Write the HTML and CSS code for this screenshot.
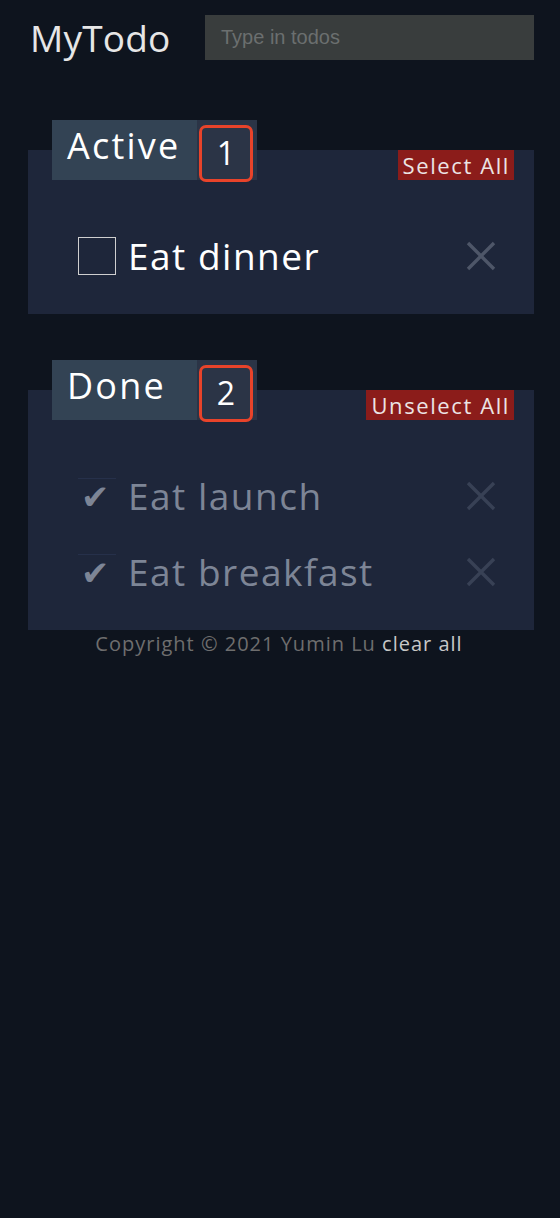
FILE: index.html
```html
<!DOCTYPE html>
<html lang="en">
<head>
<meta charset="utf-8">
<title>MyTodo</title>
<link rel="stylesheet" href="styles.css">
</head>
<body>
<header class="top">
  <h1 class="brand">MyTodo</h1>
  <input class="new-todo" type="text" placeholder="Type in todos">
</header>
<main class="lists">
  <section class="card">
    <div class="card-head">
      <div class="tab">
        <span class="tab-title">Active</span>
        <span class="count"><span class="count-box">1</span></span>
      </div>
      <button class="bulk">Select All</button>
    </div>
    <ul class="items">
      <li class="item">
        <span class="box"></span>
        <span class="label">Eat dinner</span>
        <svg class="remove" viewBox="0 0 30 30" width="30" height="30"><path d="M2 2 L28 28 M28 2 L2 28" stroke="currentColor" stroke-width="3.4" fill="none"/></svg>
      </li>
    </ul>
  </section>
  <section class="card">
    <div class="card-head">
      <div class="tab">
        <span class="tab-title">Done</span>
        <span class="count"><span class="count-box">2</span></span>
      </div>
      <button class="bulk">Unselect All</button>
    </div>
    <ul class="items">
      <li class="item done">
        <span class="check">✔</span>
        <span class="label">Eat launch</span>
        <svg class="remove" viewBox="0 0 30 30" width="30" height="30"><path d="M2 2 L28 28 M28 2 L2 28" stroke="currentColor" stroke-width="3.4" fill="none"/></svg>
      </li>
      <li class="item done">
        <span class="check">✔</span>
        <span class="label">Eat breakfast</span>
        <svg class="remove" viewBox="0 0 30 30" width="30" height="30"><path d="M2 2 L28 28 M28 2 L2 28" stroke="currentColor" stroke-width="3.4" fill="none"/></svg>
      </li>
    </ul>
  </section>
</main>
<footer class="foot">Copyright © 2021 Yumin Lu <span class="clear">clear all</span></footer>
</body>
</html>
```
FILE: styles.css
```css
* { box-sizing: border-box; }
html, body { margin: 0; padding: 0; }
body {
  background: #0e141e;
  font-family: "Open Sans", "DejaVu Sans", sans-serif;
  color: #ffffff;
  min-height: 1218px;
}
.top {
  display: flex;
  align-items: flex-start;
  padding: 15px 26px 0 30px;
}
.brand {
  margin: 0;
  width: 175px;
  font-size: 37px;
  font-weight: 400;
  line-height: 46px;
  color: #e6e6e6;
  letter-spacing: 0.2px;
}
.new-todo {
  flex: 1;
  height: 45px;
  border: none;
  background: #393d3d;
  padding: 0 16px;
  font-family: "Liberation Sans", Arial, sans-serif;
  font-size: 20px;
  color: #ddd;
  outline: none;
}
.new-todo::placeholder { color: #6b6f6f; }
.lists {
  display: flex;
  flex-direction: column;
  gap: 76px;
  margin: 89px 26px 0 28px;
}
.card {
  background: #1e263a;
}
.card-head {
  display: flex;
  justify-content: space-between;
  align-items: flex-end;
  margin-top: -30px;
  padding: 0 20px 0 24px;
}
.tab {
  display: flex;
  height: 60px;
}
.tab-title {
  width: 145px;
  background: #334354;
  font-size: 36px;
  font-weight: 500;
  line-height: 52px;
  padding-left: 15px;
  letter-spacing: 2.2px;
}
.count {
  width: 60px;
  background: #2b3446;
  padding: 5px 4px 0 2px;
}
.count-box {
  display: flex;
  justify-content: center;
  align-items: center;
  height: 57px;
  margin-bottom: -2px;
  border: 3px solid #e8432a;
  border-radius: 7px;
  font-size: 32px;
  font-weight: 400;
  padding-bottom: 2px;
}
.bulk {
  border: none;
  background: #8b1c1a;
  color: #ece4e4;
  font-family: inherit;
  font-size: 22px;
  height: 30px;
  padding: 0 4px 0 5px;
  line-height: 30px;
  letter-spacing: 1.6px;
}
.items {
  list-style: none;
  margin: 0;
  padding: 38px 0 20px 0;
}
.item {
  display: flex;
  align-items: center;
  height: 76px;
  padding: 0 38px 0 50px;
}
.box {
  width: 38px;
  height: 38px;
  border: 1.5px solid #cfcfcf;
  margin-right: 12px;
}
.check {
  width: 38px;
  margin-right: 12px;
  border-top: 1px solid #26304a;
  font-family: "DejaVu Sans", sans-serif;
  font-size: 34px;
  line-height: 36px;
  color: #7d8596;
  padding-left: 3px;
}
.label {
  flex: 1;
  font-size: 37px;
  letter-spacing: 1.5px;
  line-height: 50px;
}
.done .label { color: #7d8596; }
.remove {
  width: 30px;
  height: 30px;
  color: #4e5668;
}
.done .remove { color: #384155; }
.foot {
  text-align: center;
  font-size: 20px;
  line-height: 28px;
  color: #6e6e6e;
  letter-spacing: 1px;
  padding-right: 2px;
}
.clear { color: #c8c8c8; }
```
